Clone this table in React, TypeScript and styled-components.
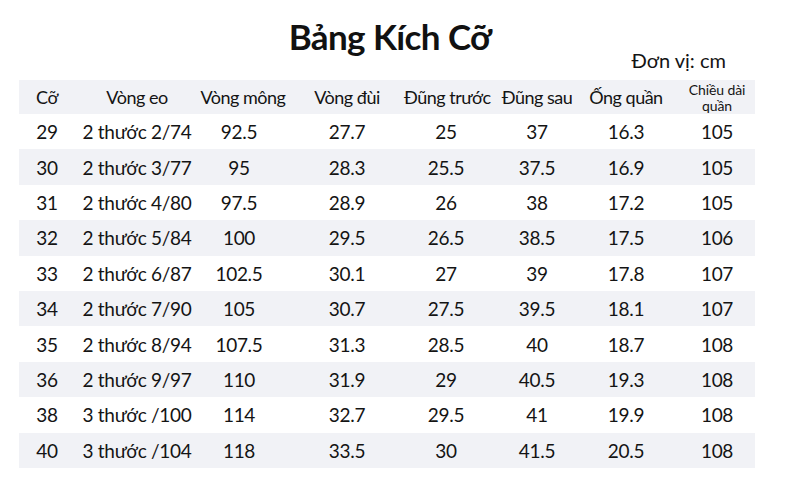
import styled, { createGlobalStyle } from 'styled-components';

const GlobalStyle = createGlobalStyle`
  html, body {
    margin: 0;
    padding: 0;
    background: #ffffff;
  }
  body {
    font-family: Lato, "Noto Sans", "Liberation Sans", sans-serif;
    color: #141414;
  }
`;

const COLUMNS = '56px 124px 88px 120px 78px 104px 74px 1fr';

const Page = styled.div`
  width: 790px;
  height: 497px;
  padding-top: 14px;
  box-sizing: border-box;
  overflow: hidden;
`;

const Title = styled.h1`
  margin: 0;
  padding-right: 10px;
  text-align: center;
  font-size: 35px;
  line-height: 44px;
  font-weight: 700;
  letter-spacing: -0.6px;
  color: #111;
`;

const Unit = styled.div`
  display: flex;
  justify-content: flex-end;
  padding-right: 64px;
  font-size: 20px;
  line-height: 22px;
  margin-top: -9px;
`;

const Table = styled.div`
  margin: 9px 0 0 19px;
  width: 736px;
  display: flex;
  flex-direction: column;
`;

const Row = styled.div<{ $shaded?: boolean; $head?: boolean }>`
  display: grid;
  grid-template-columns: ${COLUMNS};
  align-items: center;
  height: ${(p) => (p.$head ? '34px' : '35.4px')};
  background: ${(p) => (p.$shaded ? '#f1f2f6' : 'transparent')};
`;

const Cell = styled.div<{ $last?: boolean; $shift?: number }>`
  text-align: center;
  font-size: 19px;
  letter-spacing: -0.3px;
  white-space: nowrap;
  padding-left: ${(p) => (p.$last ? '16px' : '0')};
  transform: translateX(${(p) => p.$shift ?? 0}px);
`;

const HeadCell = styled(Cell)`
  font-size: 18px;
  letter-spacing: -0.5px;
`;

const SmallHead = styled(Cell)`
  font-size: 14px;
  line-height: 16px;
  letter-spacing: -0.1px;
  white-space: normal;
  padding-top: 1px;
`;

const headers = ['Cỡ', 'Vòng eo', 'Vòng mông', 'Vòng đùi', 'Đũng trước', 'Đũng sau', 'Ống quần'];

const rows = [
  ['29', '2 thước 2/74', '92.5', '27.7', '25', '37', '16.3', '105'],
  ['30', '2 thước 3/77', '95', '28.3', '25.5', '37.5', '16.9', '105'],
  ['31', '2 thước 4/80', '97.5', '28.9', '26', '38', '17.2', '105'],
  ['32', '2 thước 5/84', '100', '29.5', '26.5', '38.5', '17.5', '106'],
  ['33', '2 thước 6/87', '102.5', '30.1', '27', '39', '17.8', '107'],
  ['34', '2 thước 7/90', '105', '30.7', '27.5', '39.5', '18.1', '107'],
  ['35', '2 thước 8/94', '107.5', '31.3', '28.5', '40', '18.7', '108'],
  ['36', '2 thước 9/97', '110', '31.9', '29', '40.5', '19.3', '108'],
  ['38', '3 thước /100', '114', '32.7', '29.5', '41', '19.9', '108'],
  ['40', '3 thước /104', '118', '33.5', '30', '41.5', '20.5', '108'],
];

export default function App() {
  return (
    <Page>
      <GlobalStyle />
      <Title>Bảng Kích Cỡ</Title>
      <Unit>Đơn vị: cm</Unit>
      <Table>
        <Row $head $shaded>
          {headers.map((h, j) => (
            <HeadCell key={h} $shift={j === 4 ? -3 : 0}>
              {h}
            </HeadCell>
          ))}
          <SmallHead $last>
            Chiều dài
            <br />
            quần
          </SmallHead>
        </Row>
        {rows.map((r, i) => (
          <Row key={r[0]} $shaded={i % 2 === 1}>
            {r.map((v, j) => (
              <Cell key={j} $last={j === 7} $shift={j === 2 ? -4 : 0}>
                {v}
              </Cell>
            ))}
          </Row>
        ))}
      </Table>
    </Page>
  );
}
